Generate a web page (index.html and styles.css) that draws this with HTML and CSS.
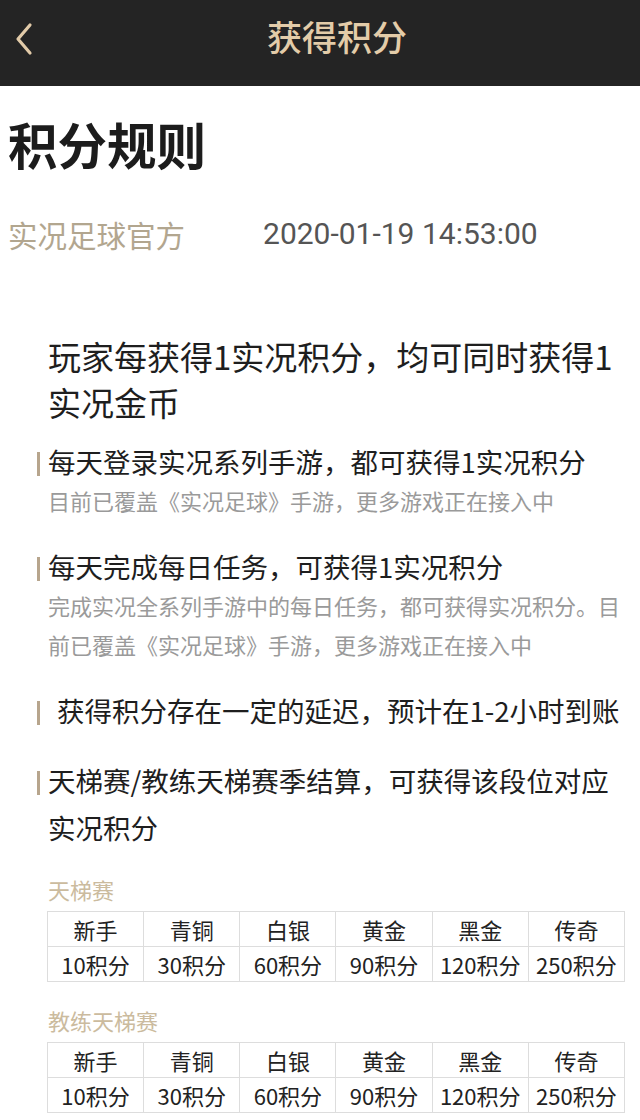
FILE: index.html
```html
<!DOCTYPE html>
<html lang="zh-CN">
<head>
<meta charset="utf-8">
<title>获得积分</title>
<link rel="stylesheet" href="styles.css">
</head>
<body>
<header class="topbar">
  <div class="back">
    <svg class="back-icon" width="20" height="34" viewBox="0 0 20 34"><path d="M16 3 L4 17 L16 31" fill="none" stroke="#e2cba9" stroke-width="3.2" stroke-linecap="round" stroke-linejoin="round"/></svg>
  </div>
  <div class="topbar-title">获得积分</div>
  <div class="topbar-spacer"></div>
</header>

<main class="page">
  <h1 class="title">积分规则</h1>
  <div class="meta">
    <span class="author">实况足球官方</span>
    <span class="date">2020-01-19 14:53:00</span>
  </div>

  <section class="body">
    <p class="intro">玩家每获得1实况积分，均可同时获得1实况金币</p>

    <div class="rule">
      <p class="rule-head"><span class="bar"></span>每天登录实况系列手游，都可获得1实况积分</p>
      <p class="rule-sub">目前已覆盖《实况足球》手游，更多游戏正在接入中</p>
    </div>

    <div class="rule">
      <p class="rule-head"><span class="bar"></span>每天完成每日任务，可获得1实况积分</p>
      <p class="rule-sub">完成实况全系列手游中的每日任务，都可获得实况积分。目前已覆盖《实况足球》手游，更多游戏正在接入中</p>
    </div>

    <div class="rule">
      <p class="rule-head"><span class="bar bar-wide"></span>获得积分存在一定的延迟，预计在1-2小时到账</p>
    </div>

    <div class="rule">
      <p class="rule-head"><span class="bar"></span>天梯赛/教练天梯赛季结算，可获得该段位对应实况积分</p>
    </div>

    <div class="tier">
      <div class="tier-label">天梯赛</div>
      <table class="tier-table">
        <tr><td>新手</td><td>青铜</td><td>白银</td><td>黄金</td><td>黑金</td><td>传奇</td></tr>
        <tr><td>10积分</td><td>30积分</td><td>60积分</td><td>90积分</td><td>120积分</td><td>250积分</td></tr>
      </table>
    </div>

    <div class="tier">
      <div class="tier-label">教练天梯赛</div>
      <table class="tier-table">
        <tr><td>新手</td><td>青铜</td><td>白银</td><td>黄金</td><td>黑金</td><td>传奇</td></tr>
        <tr><td>10积分</td><td>30积分</td><td>60积分</td><td>90积分</td><td>120积分</td><td>250积分</td></tr>
      </table>
    </div>
  </section>
</main>
</body>
</html>
```

FILE: styles.css
```css
* { box-sizing: border-box; }

html, body {
  margin: 0;
  padding: 0;
  background: #ffffff;
}

body {
  font-family: "Noto Sans CJK SC", "Noto Sans", sans-serif;
  color: #222222;
  width: 640px;
  overflow: hidden;
}

p { margin: 0; }

.topbar {
  height: 86px;
  background: #242424;
  display: flex;
  align-items: center;
}

.back {
  width: 48px;
  display: flex;
  align-items: center;
  padding-left: 14px;
  padding-bottom: 8px;
}

.back-icon { display: block; }

.topbar-title {
  flex: 1;
  text-align: center;
  font-size: 35px;
  font-weight: 500;
  color: #e3cca9;
  line-height: 40px;
  padding-bottom: 14px;
}

.topbar-spacer { width: 14px; }

.page {
  padding: 0 0 0 8px;
}

.title {
  margin: 28px 0 0 0;
  font-size: 49.5px;
  line-height: 60px;
  font-weight: 700;
  color: #1c1c1c;
}

.meta {
  margin-top: 40px;
  display: flex;
  align-items: center;
  height: 40px;
}

.author {
  font-size: 29.5px;
  color: #b2a68f;
  line-height: 40px;
}

.date {
  margin-left: 78px;
  font-family: Roboto, "Noto Sans", sans-serif;
  font-size: 30px;
  color: #555555;
  line-height: 40px;
}

.body {
  margin-top: 79px;
  padding: 0 18px 0 40px;
}

.intro {
  font-size: 33px;
  line-height: 46px;
  font-weight: 400;
  color: #1e1e1e;
}

.rule { margin-top: 23px; }
.intro + .rule { margin-top: 13px; }

.rule-head {
  font-size: 27.5px;
  line-height: 47px;
  font-weight: 400;
  color: #1e1e1e;
}

.bar {
  display: inline-block;
  width: 3px;
  height: 24px;
  background: #b7a58d;
  margin-left: -11px;
  margin-right: 8px;
  vertical-align: -3px;
}

.bar-wide { margin-right: 17px; }

.rule-sub {
  margin-top: -4px;
  font-size: 22px;
  line-height: 39px;
  color: #9a9a9a;
}

.tier { margin-top: 23px; }

.tier-label {
  font-size: 22px;
  line-height: 30px;
  color: #cbbb9e;
}

.tier-table {
  margin-top: 7px;
  margin-left: -1px;
  width: 578px;
  border-collapse: collapse;
  table-layout: fixed;
}

.tier-table td {
  border: 1px solid #dddddd;
  height: 35px;
  padding: 0;
  text-align: center;
  font-size: 22px;
  line-height: 33px;
  color: #222222;
}
```
